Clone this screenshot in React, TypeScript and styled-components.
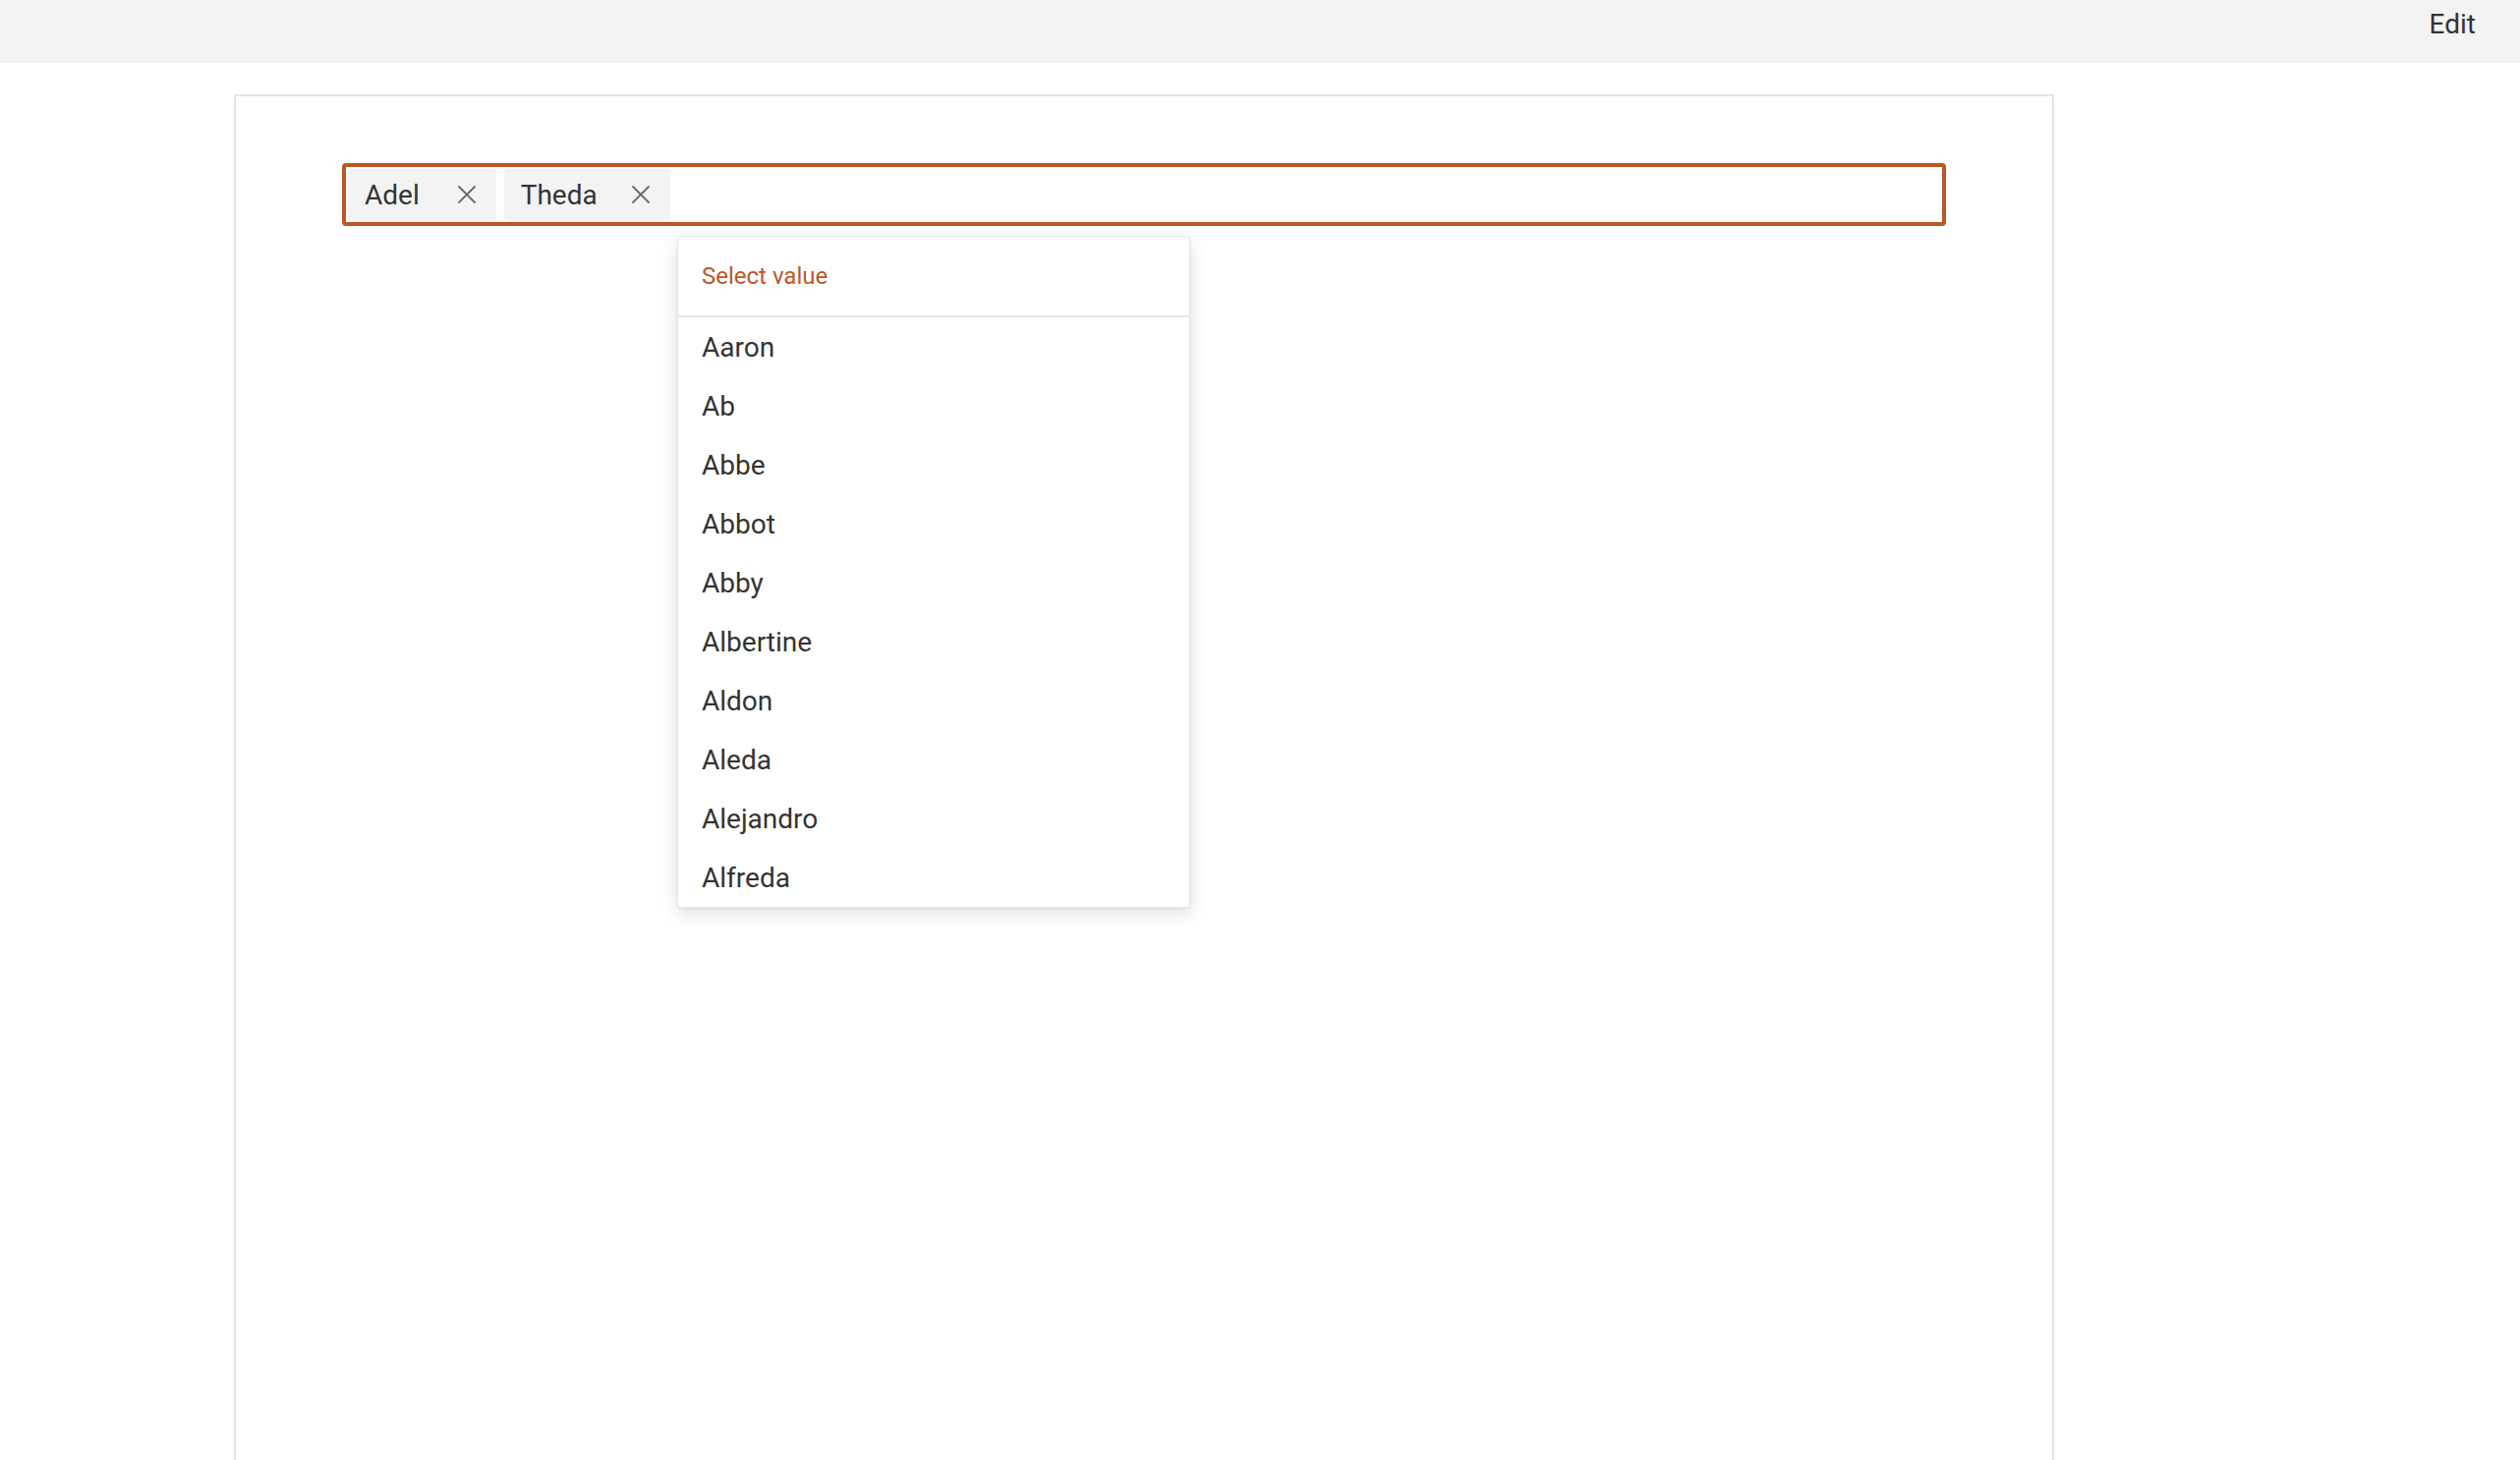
import React from "react";
import styled, { createGlobalStyle } from "styled-components";

const GlobalStyle = createGlobalStyle`
  html, body {
    margin: 0;
    padding: 0;
    background: #ffffff;
    font-family: Roboto, "Liberation Sans", Arial, sans-serif;
    color: #333333;
    overflow: hidden;
  }
  * { box-sizing: border-box; }
`;

const Page = styled.div`
  display: flex;
  flex-direction: column;
  height: 1486px;
`;

const TopBar = styled.header`
  height: 64px;
  flex: none;
  background: #f3f3f3;
  display: flex;
  justify-content: flex-end;
  align-items: flex-start;
  padding: 8px 45px 0 0;
`;

const EditLink = styled.span`
  font-size: 28px;
  line-height: 34px;
  color: #333333;
  cursor: pointer;
`;

const Main = styled.main`
  flex: 1;
  padding: 32px 0 0 238px;
`;

const Card = styled.section`
  width: 1852px;
  min-height: 1420px;
  border: 2px solid #e4e4e4;
  border-bottom: none;
  padding: 68px 108px;
`;

const SelectBox = styled.div`
  position: relative;
  width: 1632px;
  height: 64px;
  border: 4px solid #bd5526;
  border-radius: 4px;
  padding: 2px;
  display: flex;
  align-items: stretch;
  gap: 8px;
`;

const Tag = styled.div`
  display: flex;
  align-items: center;
  height: 52px;
  background: #f3f3f3;
  border-radius: 4px;
  padding: 0 21px 0 17px;
  font-size: 28px;
  color: #333333;
`;

const TagLabel = styled.span<{ $gap: number }>`
  margin-right: ${(p) => p.$gap}px;
`;

const RemoveButton = styled.span`
  display: flex;
  width: 18px;
  height: 18px;
  cursor: pointer;
`;

const Dropdown = styled.div`
  position: absolute;
  left: 337px;
  top: 70px;
  width: 522px;
  background: #ffffff;
  border: 1px solid #e6e6e6;
  border-radius: 4px;
  box-shadow: 0 6px 18px rgba(0, 0, 0, 0.12), 0 1px 3px rgba(0, 0, 0, 0.06);
  z-index: 10;
`;

const DropdownHeader = styled.div`
  height: 82px;
  display: flex;
  align-items: center;
  padding: 0 24px;
  border-bottom: 2px solid #e8e8e8;
  font-size: 24px;
  color: #c0562a;
`;

const OptionList = styled.ul`
  list-style: none;
  margin: 0;
  padding: 0;
`;

const Option = styled.li`
  height: 60px;
  display: flex;
  align-items: center;
  padding: 0 24px;
  font-size: 28px;
  color: #333333;
  cursor: pointer;
`;

const XIcon = () => (
  <svg width="18" height="18" viewBox="0 0 18 18" fill="none">
    <path d="M1 1L17 17M17 1L1 17" stroke="#6a6a6a" strokeWidth="1.8" strokeLinecap="round" />
  </svg>
);

const selected = [
  { name: "Adel", gap: 39 },
  { name: "Theda", gap: 35 },
];

const options = [
  "Aaron",
  "Ab",
  "Abbe",
  "Abbot",
  "Abby",
  "Albertine",
  "Aldon",
  "Aleda",
  "Alejandro",
  "Alfreda",
];

export default function App() {
  return (
    <>
      <GlobalStyle />
      <Page>
        <TopBar>
          <EditLink>Edit</EditLink>
        </TopBar>
        <Main>
          <Card>
            <SelectBox>
              {selected.map((t) => (
                <Tag key={t.name}>
                  <TagLabel $gap={t.gap}>{t.name}</TagLabel>
                  <RemoveButton>
                    <XIcon />
                  </RemoveButton>
                </Tag>
              ))}
              <Dropdown>
                <DropdownHeader>Select value</DropdownHeader>
                <OptionList>
                  {options.map((o) => (
                    <Option key={o}>{o}</Option>
                  ))}
                </OptionList>
              </Dropdown>
            </SelectBox>
          </Card>
        </Main>
      </Page>
    </>
  );
}
